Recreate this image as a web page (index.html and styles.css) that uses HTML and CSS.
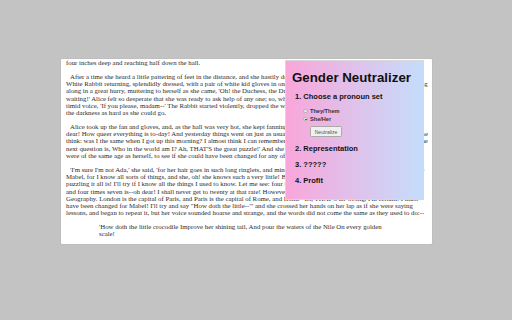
FILE: index.html
```html
<!DOCTYPE html>
<html lang="en">
<head>
<meta charset="utf-8">
<title>Gender Neutralizer</title>
<link rel="stylesheet" href="styles.css">
</head>
<body>
<div class="page">
  <div class="card">
    <p class="first">four inches deep and reaching half down the hall.</p>
    <p class="ind">After a time she heard a little pattering of feet in the distance, and she hastily dried her eyes to see what was coming. It was the White Rabbit returning, splendidly dressed, with a pair of white kid gloves in one hand and a large fan in the other: she came trotting along in a great hurry, muttering to herself as she came, 'Oh! the Duchess, the Duchess! Oh! won't she be savage if I've kept her waiting!' Alice felt so desperate that she was ready to ask help of any one; so, when the Rabbit came near her, she began, in a low, timid voice, 'If you please, madam--' The Rabbit started violently, dropped the white kid gloves and the fan, and skurried away into the darkness as hard as she could go.</p>
    <p class="ind">Alice took up the fan and gloves, and, as the hall was very hot, she kept fanning herself all the time she went on talking: 'Dear, dear! How queer everything is to-day! And yesterday things went on just as usual. I wonder if I've been changed in the night? Let me think: was I the same when I got up this morning? I almost think I can remember feeling a little different. But if I'm not the same, the next question is, Who in the world am I? Ah, THAT'S the great puzzle!' And she began thinking over all the children she knew that were of the same age as herself, to see if she could have been changed for any of them.</p>
    <p class="ind">'I'm sure I'm not Ada,' she said, 'for her hair goes in such long ringlets, and mine doesn't go in ringlets at all; and I'm sure I can't be Mabel, for I know all sorts of things, and she, oh! she knows such a very little! Besides, she's she, and I'm I, and--oh dear, how puzzling it all is! I'll try if I know all the things I used to know. Let me see: four times five is twelve, and four times six is thirteen, and four times seven is--oh dear! I shall never get to twenty at that rate! However, the Multiplication Table doesn't signify: let's try Geography. London is the capital of Paris, and Paris is the capital of Rome, and Rome--no, THAT'S all wrong, I'm certain! I must have been changed for Mabel! I'll try and say "How doth the little--"' and she crossed her hands on her lap as if she were saying lessons, and began to repeat it, but her voice sounded hoarse and strange, and the words did not come the same as they used to do:--</p>
    <p class="quote">'How doth the little crocodile Improve her shining tail, And pour the waters of the Nile On every golden scale!</p>
  </div>
  <div class="popup">
    <h1 class="title">Gender Neutralizer</h1>
    <h3 class="step">1. Choose a pronoun set</h3>
    <div class="choices">
      <label class="choice"><span class="radio"></span>They/Them</label>
      <label class="choice"><span class="radio on"></span>She/Her</label>
      <span class="btn">Neutralize</span>
    </div>
    <h3 class="step">2. Representation</h3>
    <h3 class="step">3. ?????</h3>
    <h3 class="step">4. Profit</h3>
  </div>
</div>
</body>
</html>
```
FILE: styles.css
```css
html, body {
  margin: 0;
  padding: 0;
}
body {
  background: #c3c3c3;
  width: 512px;
  height: 320px;
  overflow: hidden;
}
.page {
  position: relative;
  padding: 59px 0 0 61px;
}
.card {
  box-sizing: border-box;
  width: 371px;
  height: 185px;
  overflow: hidden;
  background: #fff;
  padding: 0 2.5px 0 5px;
  box-shadow: 0 0 1px rgba(0,0,0,0.25);
  border-radius: 1px;
  font-family: "Liberation Serif", "Times New Roman", serif;
  font-size: 6.8px;
  line-height: 7.25px;
  color: #2b2b2b;
}
.card p {
  margin: 6.6px 0;
}
.card p.first {
  margin-top: 0;
}
.card p.ind {
  text-indent: 4px;
}
.card p.quote {
  margin: 6.6px 36px 6.6px 33px;
}
.popup {
  position: absolute;
  left: 285px;
  top: 60px;
  box-sizing: border-box;
  width: 139px;
  height: 140px;
  padding: 0 6px;
  border: 1px solid #d8d8d8;
  background: linear-gradient(to right, #f9a6da, #c5ddfb);
  font-family: "Liberation Sans", Arial, sans-serif;
  color: #111;
  overflow: hidden;
}
.title {
  margin: 9px 0 4px;
  font-size: 13.3px;
  line-height: 15px;
  font-weight: bold;
}
.step {
  margin: 7.5px 0 0 3px;
  font-size: 7.5px;
  line-height: 8.6px;
  font-weight: bold;
}
.choices {
  display: flex;
  flex-direction: column;
  align-items: flex-start;
  padding: 6px 0 0 11px;
  margin-bottom: 4px;
}
.choice {
  display: flex;
  align-items: center;
  gap: 2.5px;
  height: 8px;
  font-size: 5.6px;
  font-weight: bold;
  color: #333;
}
.radio {
  box-sizing: border-box;
  width: 4.5px;
  height: 4.5px;
  border-radius: 50%;
  background: #e8e8e8;
  border: 0.5px solid #b5b5b5;
  position: relative;
}
.radio.on::after {
  content: "";
  position: absolute;
  left: 1.1px;
  top: 1.1px;
  width: 1.5px;
  height: 1.5px;
  border-radius: 50%;
  background: #444;
}
.btn {
  margin: 3px 0 0 7px;
  box-sizing: border-box;
  height: 11px;
  width: 32px;
  display: flex;
  align-items: center;
  justify-content: center;
  font-size: 5px;
  color: #555;
  background: #f0f0f0;
  border: 0.5px solid #a9a9a9;
  border-radius: 1.5px;
}
```
